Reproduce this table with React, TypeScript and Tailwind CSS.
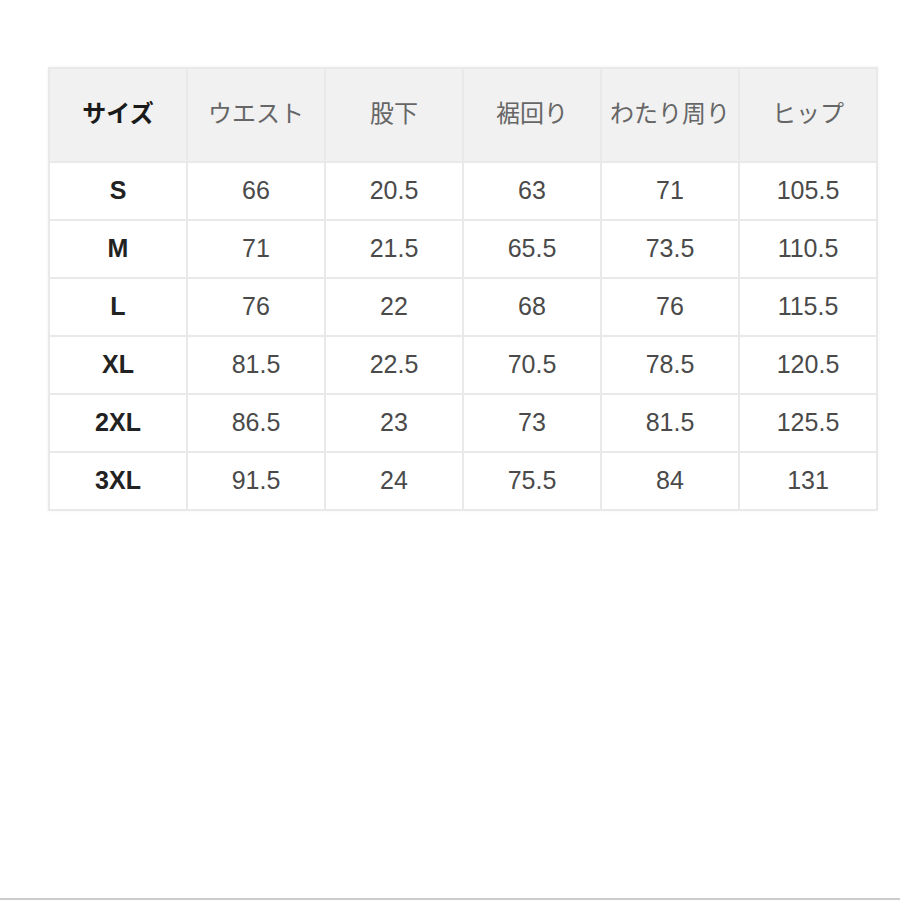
import React from "react";

const headers = ["サイズ", "ウエスト", "股下", "裾回り", "わたり周り", "ヒップ"];
const rows = [
  ["S", "66", "20.5", "63", "71", "105.5"],
  ["M", "71", "21.5", "65.5", "73.5", "110.5"],
  ["L", "76", "22", "68", "76", "115.5"],
  ["XL", "81.5", "22.5", "70.5", "78.5", "120.5"],
  ["2XL", "86.5", "23", "73", "81.5", "125.5"],
  ["3XL", "91.5", "24", "75.5", "84", "131"],
];

export default function App() {
  return (
    <div
      className="h-[900px] w-[900px] bg-white border-b-2 border-[#cccccc] pt-[67px] pl-[48px]"
      style={{ fontFamily: '"Liberation Sans", "Noto Sans CJK JP", sans-serif' }}
    >
      <div className="w-[830px] grid grid-cols-[repeat(6,136px)] gap-[2px] p-[2px] bg-[#e9e9e9] shadow-[0_0_3px_rgba(0,0,0,0.06)]">
        {headers.map((h, i) => (
          <div
            key={h}
            className={
              "h-[92px] bg-[#f1f1f1] flex items-center justify-center text-[24px] pb-[2px] " +
              (i === 0 ? "font-bold text-[#1a1a1a]" : "text-[#666666]")
            }
          >
            {h}
          </div>
        ))}
        {rows.map((r) =>
          r.map((c, j) => (
            <div
              key={r[0] + j}
              className={
                "h-[56px] bg-white flex items-center justify-center text-[25px] " +
                (j === 0 ? "font-bold text-[#222222] text-[24px]" : "text-[#4a4a4a]")
              }
            >
              {c}
            </div>
          ))
        )}
      </div>
    </div>
  );
}
